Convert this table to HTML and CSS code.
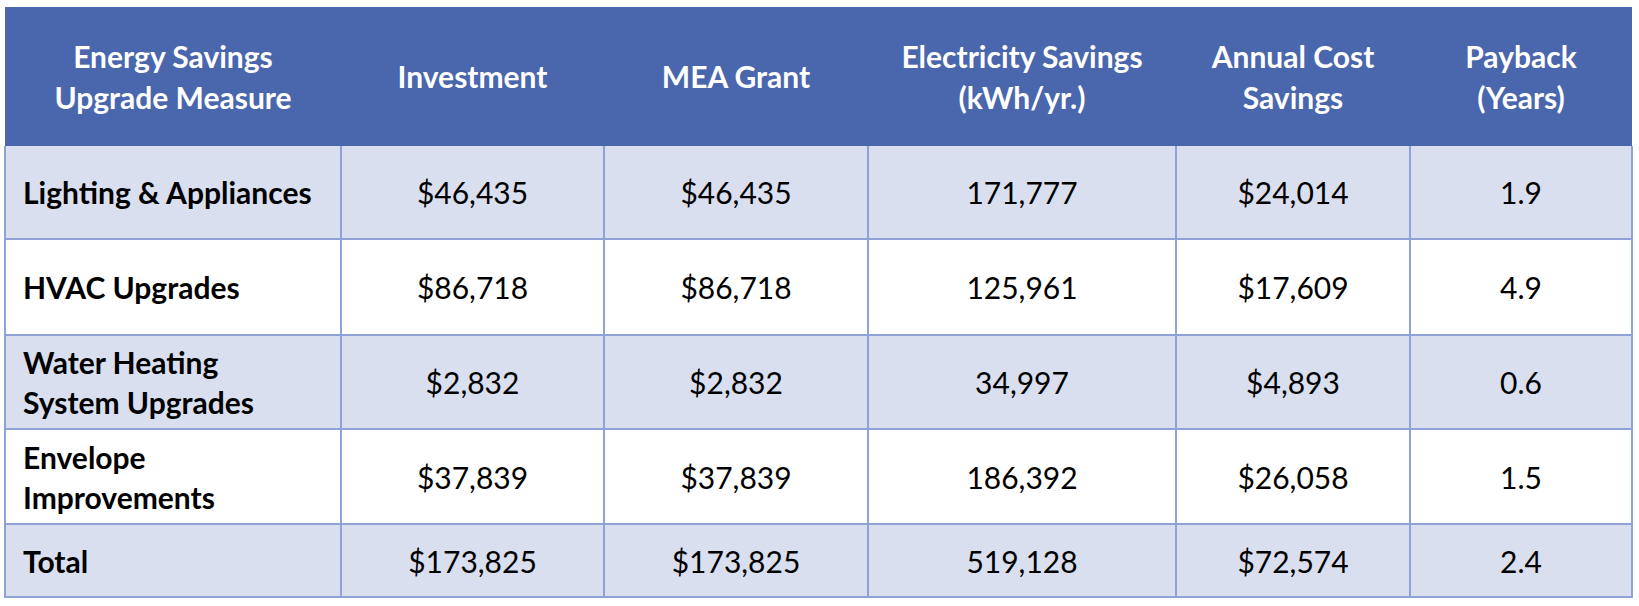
FILE: index.html
```html
<!DOCTYPE html>
<html>
<head>
<meta charset="utf-8">
<link rel="stylesheet" href="styles.css">
</head>
<body>
<table class="savings">
  <colgroup>
    <col class="c1"><col class="c2"><col class="c3"><col class="c4"><col class="c5"><col class="c6">
  </colgroup>
  <thead>
    <tr class="head">
      <th>Energy Savings<br>Upgrade Measure</th>
      <th>Investment</th>
      <th>MEA Grant</th>
      <th>Electricity Savings<br>(kWh/yr.)</th>
      <th>Annual Cost<br>Savings</th>
      <th>Payback<br>(Years)</th>
    </tr>
  </thead>
  <tbody>
    <tr class="r1 shade">
      <td class="label">Lighting &amp; Appliances</td>
      <td>$46,435</td><td>$46,435</td><td>171,777</td><td>$24,014</td><td>1.9</td>
    </tr>
    <tr class="r2">
      <td class="label">HVAC Upgrades</td>
      <td>$86,718</td><td>$86,718</td><td>125,961</td><td>$17,609</td><td>4.9</td>
    </tr>
    <tr class="r3 shade">
      <td class="label">Water Heating<br>System Upgrades</td>
      <td>$2,832</td><td>$2,832</td><td>34,997</td><td>$4,893</td><td>0.6</td>
    </tr>
    <tr class="r4">
      <td class="label">Envelope<br>Improvements</td>
      <td>$37,839</td><td>$37,839</td><td>186,392</td><td>$26,058</td><td>1.5</td>
    </tr>
    <tr class="r5 shade">
      <td class="label">Total</td>
      <td>$173,825</td><td>$173,825</td><td>519,128</td><td>$72,574</td><td>2.4</td>
    </tr>
  </tbody>
</table>
</body>
</html>
```

FILE: styles.css
```css
html, body {
  margin: 0;
  padding: 0;
  background: #ffffff;
}

body {
  padding: 7px 0 0 4px;
  font-family: Lato, "Open Sans", "Liberation Sans", sans-serif;
}

.savings {
  border-collapse: collapse;
  table-layout: fixed;
  width: 1627px;
  font-size: 30px;
  color: #000;
}

.c1 { width: 336px; }
.c2 { width: 263px; }
.c3 { width: 264px; }
.c4 { width: 308px; }
.c5 { width: 234px; }
.c6 { width: 222px; }

.head th {
  background: #4a66ad;
  color: #ffffff;
  font-weight: 700;
  height: 139px;
  padding: 0 6px;
  line-height: 41px;
  text-align: center;
  vertical-align: middle;
  border: none;
}

tbody td {
  border: 2px solid #90a2d5;
  text-align: center;
  vertical-align: middle;
  padding: 0 6px;
  line-height: 40px;
  background: #ffffff;
}

tbody tr.shade td {
  background: #d9dfef;
}

tbody tr:first-child td {
  border-top: none;
}

td.label {
  text-align: left;
  font-weight: 700;
  padding-left: 17px;
}

.r1 td { height: 92px; }
.r2 td { height: 94px; }
.r3 td { height: 92px; }
.r4 td { height: 93px; }
.r5 td { height: 71px; }
```
